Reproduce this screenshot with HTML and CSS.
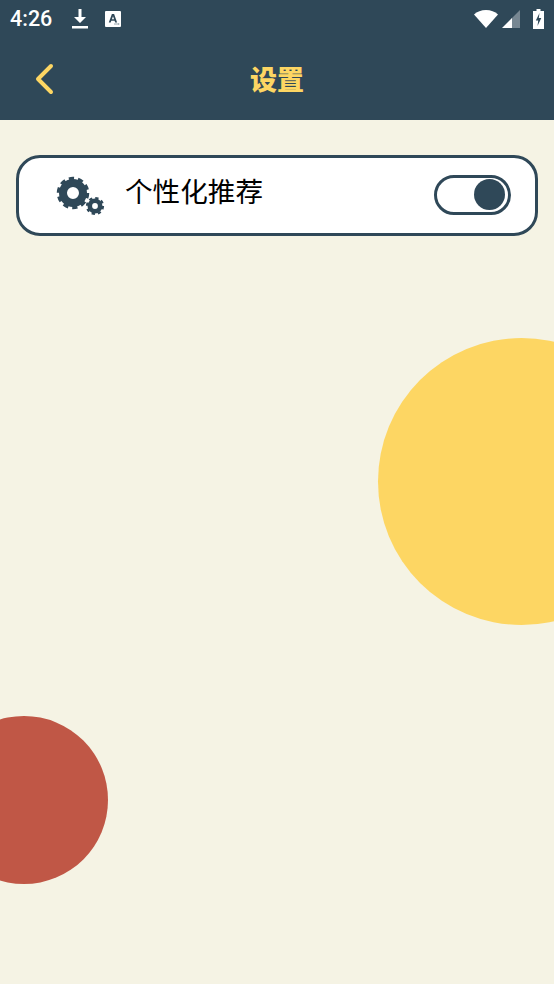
FILE: index.html
```html
<!DOCTYPE html>
<html lang="zh-CN">
<head>
<meta charset="utf-8">
<title>设置</title>
<link rel="stylesheet" href="styles.css">
</head>
<body>
<div class="screen">
  <header class="top">
    <div class="status">
      <span class="time">4:26</span>
      <svg class="st-dl" width="16" height="20" viewBox="0 0 16 20"><path class="w" d="M6.5 0h3v8H14l-6 6-6-6h4.500z"/><rect class="w" x="0" y="17" width="16" height="2.500"/></svg>
      <svg class="st-a" width="16" height="16" viewBox="0 0 16 16"><path class="w" fill-rule="evenodd" d="M1 0h14a1 1 0 0 1 1 1v14a1 1 0 0 1-1 1H1a1 1 0 0 1-1-1V1a1 1 0 0 1 1-1zM6.900 3 3.800 11.500h1.900l.6-1.800h3.300l.6 1.800h1.900L9.100 3zM8 5.200l1.100 3H6.900zM9.500 12.500h1v1h-1zM11.500 12.500h1v1h-1zM13.200 12.500h1v1h-1z"/></svg>
      <span class="spacer"></span>
      <svg class="st-wifi" width="24" height="18" viewBox="0 0 24 18"><path class="w" d="M0 4.500C3 1.700 7.300 0 12 0s9 1.700 12 4.500L12 18z"/></svg>
      <svg class="st-sig" width="18" height="18" viewBox="0 0 18 18"><path class="dim" d="M18 0v18H9V9z"/><path class="w" d="M10 8v10H0z"/></svg>
      <svg class="st-bat" width="11" height="20" viewBox="0 0 11 20"><path class="w" fill-rule="evenodd" d="M3.500 0h4v2H11v18H0V2h3.500zM6.500 4 2.800 11.500h2.400L4.500 17l3.800-8H5.800z"/></svg>
    </div>
    <nav class="bar">
      <svg class="back" width="20" height="32" viewBox="0 0 20 32"><path d="M17 3 4 16l13 13" /></svg>
      <h1 class="title">设置</h1>
    </nav>
  </header>
  <main class="content">
    <section class="card">
      <svg class="gears" width="50" height="42" viewBox="0 0 50 42">
        <g class="gear-shape">
          <circle class="ring" cx="18" cy="18" r="10" stroke-width="8"/>
          <circle class="teeth" cx="18" cy="18" r="14.500" stroke-width="3.500" stroke-dasharray="5.200 3.910"/>
          <circle class="ring" cx="40" cy="31" r="5.200" stroke-width="4.600"/>
          <circle class="teeth" cx="40" cy="31" r="8" stroke-width="2.200" stroke-dasharray="3.300 2.983"/>
        </g>
      </svg>
      <span class="label">个性化推荐</span>
      <div class="toggle"><span class="knob"></span></div>
    </section>
  </main>
  <div class="blob yellow"></div>
  <div class="blob red"></div>
</div>
</body>
</html>
```
FILE: styles.css
```css
* { box-sizing: border-box; }
html, body { margin: 0; padding: 0; }
body { width: 554px; height: 984px; overflow: hidden; font-family: "Noto Sans CJK SC", "Noto Sans", sans-serif; }
.screen { position: relative; width: 554px; height: 984px; background: #f5f3e4; overflow: hidden; }
.top { position: relative; z-index: 1; background: #2f4858; height: 120px; }
.status { height: 40px; display: flex; align-items: center; padding: 0 11px 2px 10px; }
.time { font: 500 21.500px/24px Roboto, sans-serif; color: #fff; width: 41px; white-space: nowrap; }
.w { fill: #fff; }
.dim { fill: #fff; opacity: .35; }
.st-dl { margin-left: 21px; }
.st-a { margin-left: 17px; }
.spacer { flex: 1; }
.st-sig { margin-left: 4px; }
.st-bat { margin-left: 13px; margin-right: -1px; }
.bar { height: 80px; display: flex; align-items: center; justify-content: center; position: relative; }
.back { position: absolute; left: 34px; top: 23px; }
.back path { fill: none; stroke: #fdd663; stroke-width: 4; stroke-linecap: round; stroke-linejoin: round; }
.title { margin: -2px 0 0; font-size: 27px; font-weight: 900; line-height: 36px; color: #fdd663; }
.content { position: relative; z-index: 1; padding: 35px 16px 0; }
.card { display: flex; align-items: center; height: 81px; background: #fff; border: 3px solid #2f4858; border-radius: 24px; padding: 0 24px 0 36px; }
.gears { flex: none; margin-top: 1px; }
.gear-shape circle { fill: none; stroke: #2f4858; }
.label { margin-left: 20px; margin-top: -12px; font-size: 27.600px; line-height: 38px; color: #000; white-space: nowrap; }
.toggle { margin-left: auto; margin-top: -2px; width: 77px; height: 40px; border: 3px solid #2f4858; border-radius: 20px; display: flex; align-items: center; justify-content: flex-end; padding-right: 3px; }
.knob { width: 31px; height: 31px; border-radius: 50%; background: #2f4858; }
.blob { position: absolute; border-radius: 50%; }
.yellow { left: 378px; top: 338px; width: 287px; height: 287px; background: #fdd663; }
.red { left: -60px; top: 716px; width: 168px; height: 168px; background: #c05746; }
```
